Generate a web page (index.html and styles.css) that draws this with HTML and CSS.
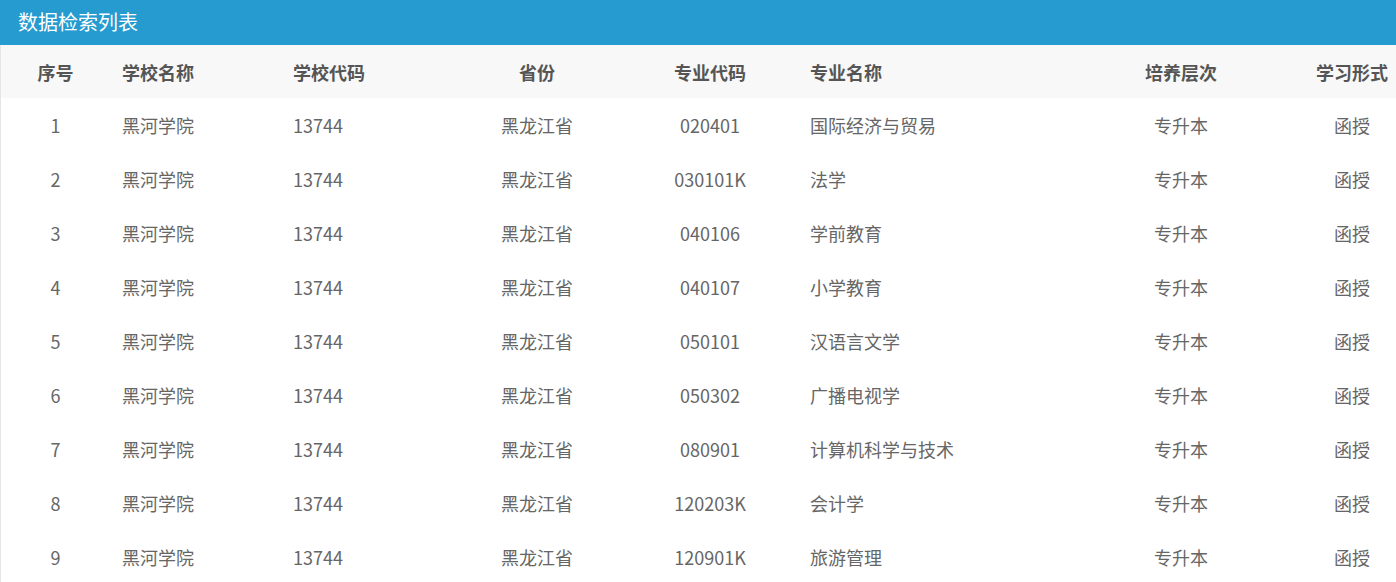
FILE: index.html
```html
<!DOCTYPE html>
<html lang="zh">
<head>
<meta charset="utf-8">
<link rel="stylesheet" href="styles.css">
</head>
<body>
<div class="panel">
  <div class="title">数据检索列表</div>
  <table class="grid">
    <colgroup>
      <col class="c1"><col class="c2"><col class="c3"><col class="c4"><col class="c5"><col class="c6"><col class="c7"><col class="c8">
    </colgroup>
    <thead>
      <tr><th class="ctr">序号</th><th>学校名称</th><th>学校代码</th><th class="ctr">省份</th><th class="ctr">专业代码</th><th>专业名称</th><th class="ctr">培养层次</th><th class="ctr">学习形式</th></tr>
    </thead>
    <tbody>
      <tr><td class="ctr">1</td><td>黑河学院</td><td>13744</td><td class="ctr">黑龙江省</td><td class="ctr">020401</td><td>国际经济与贸易</td><td class="ctr">专升本</td><td class="ctr">函授</td></tr>
      <tr><td class="ctr">2</td><td>黑河学院</td><td>13744</td><td class="ctr">黑龙江省</td><td class="ctr">030101K</td><td>法学</td><td class="ctr">专升本</td><td class="ctr">函授</td></tr>
      <tr><td class="ctr">3</td><td>黑河学院</td><td>13744</td><td class="ctr">黑龙江省</td><td class="ctr">040106</td><td>学前教育</td><td class="ctr">专升本</td><td class="ctr">函授</td></tr>
      <tr><td class="ctr">4</td><td>黑河学院</td><td>13744</td><td class="ctr">黑龙江省</td><td class="ctr">040107</td><td>小学教育</td><td class="ctr">专升本</td><td class="ctr">函授</td></tr>
      <tr><td class="ctr">5</td><td>黑河学院</td><td>13744</td><td class="ctr">黑龙江省</td><td class="ctr">050101</td><td>汉语言文学</td><td class="ctr">专升本</td><td class="ctr">函授</td></tr>
      <tr><td class="ctr">6</td><td>黑河学院</td><td>13744</td><td class="ctr">黑龙江省</td><td class="ctr">050302</td><td>广播电视学</td><td class="ctr">专升本</td><td class="ctr">函授</td></tr>
      <tr><td class="ctr">7</td><td>黑河学院</td><td>13744</td><td class="ctr">黑龙江省</td><td class="ctr">080901</td><td>计算机科学与技术</td><td class="ctr">专升本</td><td class="ctr">函授</td></tr>
      <tr><td class="ctr">8</td><td>黑河学院</td><td>13744</td><td class="ctr">黑龙江省</td><td class="ctr">120203K</td><td>会计学</td><td class="ctr">专升本</td><td class="ctr">函授</td></tr>
      <tr><td class="ctr">9</td><td>黑河学院</td><td>13744</td><td class="ctr">黑龙江省</td><td class="ctr">120901K</td><td>旅游管理</td><td class="ctr">专升本</td><td class="ctr">函授</td></tr>
    </tbody>
  </table>
</div>
</body>
</html>
```

FILE: styles.css
```css
html, body {
  margin: 0;
  padding: 0;
  background: #fff;
}
body {
  font-family: "Noto Sans CJK SC", "Noto Sans", sans-serif;
}
.panel {
  width: 1396px;
  border-left: 1px solid #e6e6e6;
  box-sizing: border-box;
}
.title {
  height: 45px;
  line-height: 43px;
  background: #259bd0;
  color: #fff;
  font-size: 20px;
  padding-left: 18px;
  margin-left: -1px;
}
.grid {
  width: 100%;
  border-collapse: collapse;
  table-layout: fixed;
}
.c1 { width: 109px; }
.c2 { width: 171px; }
.c3 { width: 171px; }
.c4 { width: 170px; }
.c5 { width: 176px; }
.c6 { width: 256px; }
.c7 { width: 254px; }
.c8 { width: auto; }
.grid th, .grid td {
  height: 54px;
  padding: 0 0 0 12px;
  text-align: left;
  font-size: 18px;
  white-space: nowrap;
  box-sizing: border-box;
}
.grid th.ctr, .grid td.ctr {
  text-align: center;
  padding: 0;
}
.grid thead th {
  background: #f8f8f8;
  color: #555;
  font-weight: bold;
  height: 53px;
}
.grid td {
  color: #666;
}
```
